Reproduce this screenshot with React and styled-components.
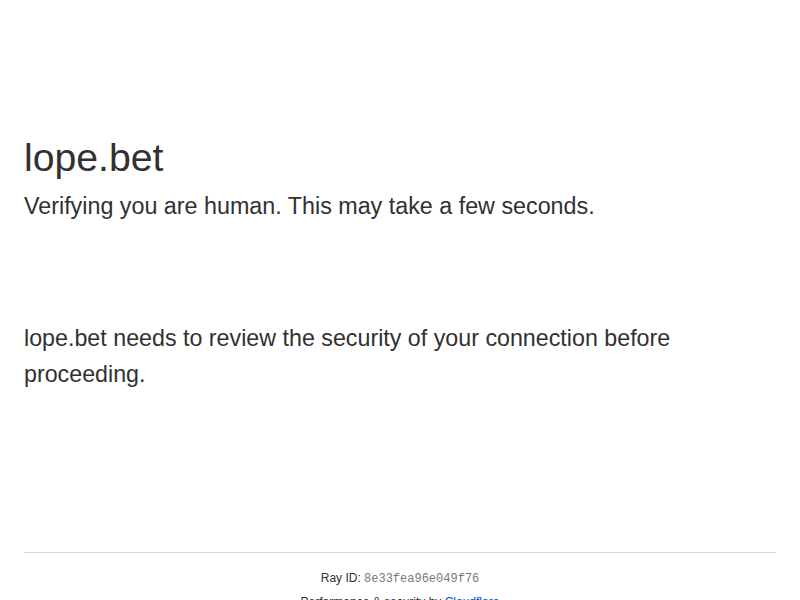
import React from "react";
import styled, { createGlobalStyle } from "styled-components";

const Global = createGlobalStyle`
  html, body { margin: 0; padding: 0; background: #fff; }
  body {
    font-family: "Liberation Sans", Arial, sans-serif;
    color: #313131;
  }
  *, *::before, *::after { box-sizing: border-box; }
`;

const Page = styled.div`
  display: flex;
  flex-direction: column;
  min-height: 100vh;
`;

const Main = styled.main`
  display: flex;
  flex-direction: column;
  align-items: center;
  flex: 1;
`;

const Content = styled.div`
  margin: 128px auto;
  max-width: 960px;
  width: 100%;
  padding: 0 24px;
`;

const Title = styled.h1`
  margin: 0;
  font-size: 39.2px;
  font-weight: 500;
  line-height: 60px;
`;

const Subtitle = styled.h2`
  margin: 0;
  font-size: 23.3px;
  font-weight: 500;
  line-height: 36px;
`;

const CoreMsg = styled.div`
  margin: 96px 0 32px;
  font-size: 23.25px;
  line-height: 36px;
`;

const Footer = styled.footer`
  margin: 0 auto;
  max-width: 960px;
  width: 100%;
  padding: 0 24px;
  font-size: 12px;
  line-height: 18px;
`;

const FooterInner = styled.div`
  border-top: 1px solid #d9d9d9;
  padding: 16px 0;
  text-align: center;
`;

const Line = styled.div`
  margin-bottom: ${(p) => (p.$gap ? "5px" : "0")};
`;

const Code = styled.code`
  font-family: "Liberation Mono", "Courier New", monospace;
  font-size: 12px;
  color: #787878;
`;

const Link = styled.a`
  color: #0051c3;
  text-decoration: none;
`;

export default function App() {
  return (
    <Page>
      <Global />
      <Main>
        <Content>
          <Title>lope.bet</Title>
          <Subtitle>Verifying you are human. This may take a few seconds.</Subtitle>
          <CoreMsg>
            lope.bet needs to review the security of your connection before proceeding.
          </CoreMsg>
        </Content>
      </Main>
      <Footer>
        <FooterInner>
          <Line $gap>
            Ray ID: <Code>8e33fea96e049f76</Code>
          </Line>
          <Line>
            Performance &amp; security by <Link href="#">Cloudflare</Link>
          </Line>
        </FooterInner>
      </Footer>
    </Page>
  );
}
